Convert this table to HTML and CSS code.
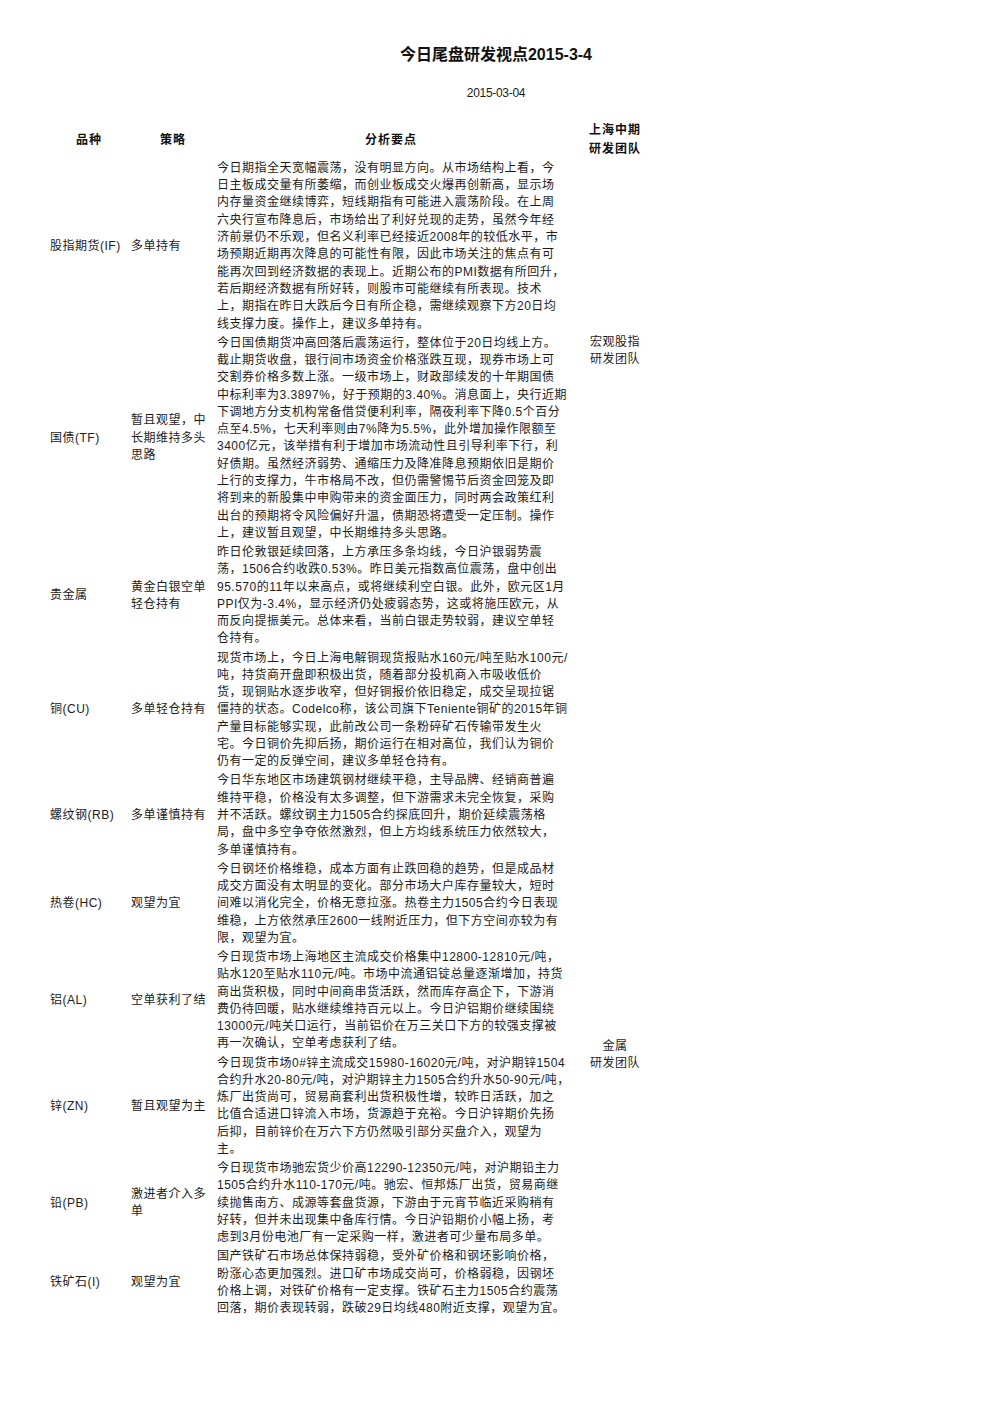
FILE: index.html
```html
<!DOCTYPE html>
<html lang="zh-CN">
<head>
<meta charset="utf-8">
<title>今日尾盘研发视点2015-3-4</title>
<link rel="stylesheet" href="styles.css">
</head>
<body>
<div class="page">
  <h1 class="title">今日尾盘研发视点2015-3-4</h1>
  <div class="date">2015-03-04</div>
  <table class="report">
    <colgroup>
      <col class="c-kind"><col class="c-strat"><col class="c-text"><col class="c-team">
    </colgroup>
    <thead>
      <tr>
        <th class="h-kind">品种</th>
        <th class="h-strat">策略</th>
        <th class="h-text">分析要点</th>
        <th class="h-team">上海中期<br>研发团队</th>
      </tr>
    </thead>
    <tbody>
      <tr>
        <td class="kind">股指期货(IF)</td>
        <td class="strat">多单持有</td>
        <td class="text">今日期指全天宽幅震荡，没有明显方向。从市场结构上看，今<br>日主板成交量有所萎缩，而创业板成交火爆再创新高，显示场<br>内存量资金继续博弈，短线期指有可能进入震荡阶段。在上周<br>六央行宣布降息后，市场给出了利好兑现的走势，虽然今年经<br>济前景仍不乐观，但名义利率已经接近2008年的较低水平，市<br>场预期近期再次降息的可能性有限，因此市场关注的焦点有可<br>能再次回到经济数据的表现上。近期公布的PMI数据有所回升，<br>若后期经济数据有所好转，则股市可能继续有所表现。技术<br>上，期指在昨日大跌后今日有所企稳，需继续观察下方20日均<br>线支撑力度。操作上，建议多单持有。</td>
        <td class="team" rowspan="2">宏观股指<br>研发团队</td>
      </tr>
      <tr>
        <td class="kind">国债(TF)</td>
        <td class="strat">暂且观望，中<br>长期维持多头<br>思路</td>
        <td class="text">今日国债期货冲高回落后震荡运行，整体位于20日均线上方。<br>截止期货收盘，银行间市场资金价格涨跌互现，现券市场上可<br>交割券价格多数上涨。一级市场上，财政部续发的十年期国债<br>中标利率为3.3897%，好于预期的3.40%。消息面上，央行近期<br>下调地方分支机构常备借贷便利利率，隔夜利率下降0.5个百分<br>点至4.5%，七天利率则由7%降为5.5%，此外增加操作限额至<br>3400亿元，该举措有利于增加市场流动性且引导利率下行，利<br>好债期。虽然经济弱势、通缩压力及降准降息预期依旧是期价<br>上行的支撑力，牛市格局不改，但仍需警惕节后资金回笼及即<br>将到来的新股集中申购带来的资金面压力，同时两会政策红利<br>出台的预期将令风险偏好升温，债期恐将遭受一定压制。操作<br>上，建议暂且观望，中长期维持多头思路。</td>
      </tr>
      <tr>
        <td class="kind">贵金属</td>
        <td class="strat">黄金白银空单<br>轻仓持有</td>
        <td class="text">昨日伦敦银延续回落，上方承压多条均线，今日沪银弱势震<br>荡，1506合约收跌0.53%。昨日美元指数高位震荡，盘中创出<br>95.570的11年以来高点，或将继续利空白银。此外，欧元区1月<br>PPI仅为-3.4%，显示经济仍处疲弱态势，这或将施压欧元，从<br>而反向提振美元。总体来看，当前白银走势较弱，建议空单轻<br>仓持有。</td>
        <td class="team team-metal" rowspan="8">金属<br>研发团队</td>
      </tr>
      <tr>
        <td class="kind">铜(CU)</td>
        <td class="strat">多单轻仓持有</td>
        <td class="text">现货市场上，今日上海电解铜现货报贴水160元/吨至贴水100元/<br>吨，持货商开盘即积极出货，随着部分投机商入市吸收低价<br>货，现铜贴水逐步收窄，但好铜报价依旧稳定，成交呈现拉锯<br>僵持的状态。Codelco称，该公司旗下Teniente铜矿的2015年铜<br>产量目标能够实现，此前改公司一条粉碎矿石传输带发生火<br>宅。今日铜价先抑后扬，期价运行在相对高位，我们认为铜价<br>仍有一定的反弹空间，建议多单轻仓持有。</td>
      </tr>
      <tr>
        <td class="kind">螺纹钢(RB)</td>
        <td class="strat">多单谨慎持有</td>
        <td class="text">今日华东地区市场建筑钢材继续平稳，主导品牌、经销商普遍<br>维持平稳，价格没有太多调整，但下游需求未完全恢复，采购<br>并不活跃。螺纹钢主力1505合约探底回升，期价延续震荡格<br>局，盘中多空争夺依然激烈，但上方均线系统压力依然较大，<br>多单谨慎持有。</td>
      </tr>
      <tr>
        <td class="kind">热卷(HC)</td>
        <td class="strat">观望为宜</td>
        <td class="text">今日钢坯价格维稳，成本方面有止跌回稳的趋势，但是成品材<br>成交方面没有太明显的变化。部分市场大户库存量较大，短时<br>间难以消化完全，价格无意拉涨。热卷主力1505合约今日表现<br>维稳，上方依然承压2600一线附近压力，但下方空间亦较为有<br>限，观望为宜。</td>
      </tr>
      <tr>
        <td class="kind">铝(AL)</td>
        <td class="strat">空单获利了结</td>
        <td class="text">今日现货市场上海地区主流成交价格集中12800-12810元/吨，<br>贴水120至贴水110元/吨。市场中流通铝锭总量逐渐增加，持货<br>商出货积极，同时中间商串货活跃，然而库存高企下，下游消<br>费仍待回暖，贴水继续维持百元以上。今日沪铝期价继续围绕<br>13000元/吨关口运行，当前铝价在万三关口下方的较强支撑被<br>再一次确认，空单考虑获利了结。</td>
      </tr>
      <tr>
        <td class="kind">锌(ZN)</td>
        <td class="strat">暂且观望为主</td>
        <td class="text">今日现货市场0#锌主流成交15980-16020元/吨，对沪期锌1504<br>合约升水20-80元/吨，对沪期锌主力1505合约升水50-90元/吨，<br>炼厂出货尚可，贸易商套利出货积极性增，较昨日活跃，加之<br>比值合适进口锌流入市场，货源趋于充裕。今日沪锌期价先扬<br>后抑，目前锌价在万六下方仍然吸引部分买盘介入，观望为<br>主。</td>
      </tr>
      <tr>
        <td class="kind">铅(PB)</td>
        <td class="strat">激进者介入多<br>单</td>
        <td class="text">今日现货市场驰宏货少价高12290-12350元/吨，对沪期铅主力<br>1505合约升水110-170元/吨。驰宏、恒邦炼厂出货，贸易商继<br>续抛售南方、成源等套盘货源，下游由于元宵节临近采购稍有<br>好转，但并未出现集中备库行情。今日沪铅期价小幅上扬，考<br>虑到3月份电池厂有一定采购一样，激进者可少量布局多单。</td>
      </tr>
      <tr>
        <td class="kind">铁矿石(I)</td>
        <td class="strat">观望为宜</td>
        <td class="text">国产铁矿石市场总体保持弱稳，受外矿价格和钢坯影响价格，<br>盼涨心态更加强烈。进口矿市场成交尚可，价格弱稳，因钢坯<br>价格上调，对铁矿价格有一定支撑。铁矿石主力1505合约震荡<br>回落，期价表现转弱，跌破29日均线480附近支撑，观望为宜。</td>
      </tr>
    </tbody>
  </table>
</div>
</body>
</html>
```

FILE: styles.css
```css
html, body {
  margin: 0;
  padding: 0;
  background: #ffffff;
}

body {
  font-family: "Liberation Sans", "Noto Sans CJK SC", sans-serif;
  font-size: 12px;
  color: #1c1c1c;
}

.page {
  width: 992px;
  padding-top: 45px;
}

.title {
  margin: 0;
  text-align: center;
  font-size: 16px;
  font-weight: bold;
  line-height: 20px;
  color: #111;
}

.date {
  margin-top: 20px;
  text-align: center;
  font-size: 12px;
  line-height: 16px;
  letter-spacing: -0.3px;
}

.report {
  margin-top: 18px;
  margin-left: 50px;
  border-collapse: collapse;
  table-layout: fixed;
  width: 615px;
}

.c-kind { width: 81px; }
.c-strat { width: 86px; }
.c-text { width: 348px; }
.c-team { width: 100px; }

.report th {
  padding: 2px 0 0;
  font-weight: bold;
  font-size: 12px;
  line-height: 19px;
  letter-spacing: 1px;
  vertical-align: middle;
  text-align: center;
  color: #111;
}

.report th.h-kind { text-align: left; padding-left: 26px; }
.report th.h-strat { text-align: left; padding-left: 29px; }

.report td {
  padding: 0.9px 0;
  vertical-align: middle;
  line-height: 17.3px;
  letter-spacing: 0.5px;
  text-align: left;
}

.report td.text {
  white-space: nowrap;
}

.report td.team {
  text-align: center;
  padding-left: 0;
}

.report td.team-metal {
  vertical-align: top;
  padding-top: 495px;
}
```
